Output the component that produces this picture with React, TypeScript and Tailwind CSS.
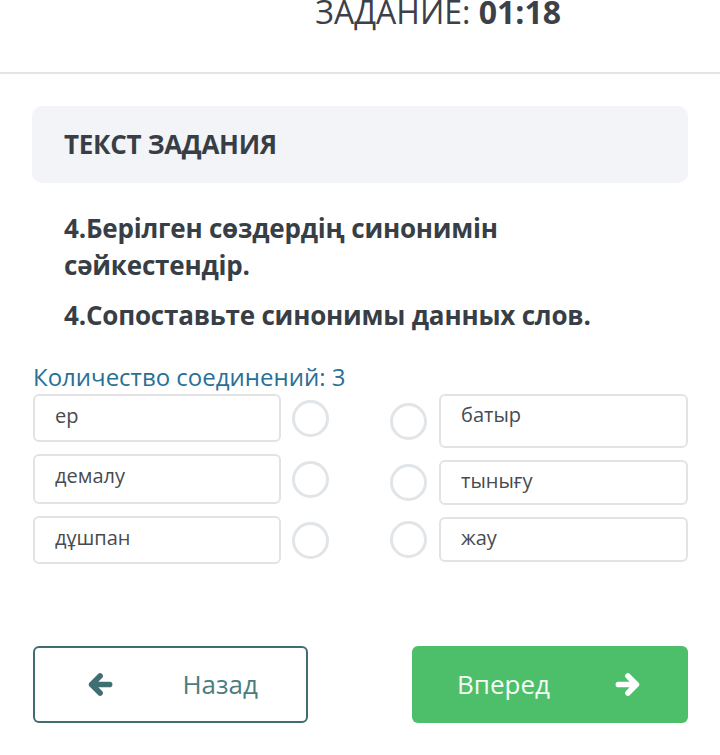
const leftItems = [
  { text: 'ер', h: 'h-[48px]' },
  { text: 'демалу', h: 'h-[50px]' },
  { text: 'дұшпан', h: 'h-[48px]' },
];

const rightItems = [
  { text: 'батыр', h: 'h-[54px]' },
  { text: 'тынығу', h: 'h-[45px]' },
  { text: 'жау', h: 'h-[45px]' },
];

function Circle() {
  return <div className="w-[37px] h-[37px] rounded-full border-[3px] border-[#e1e5e8] bg-white shrink-0" />;
}

// chunky arrow like the font-awesome solid one
function Arrow({ dir, className }: { dir: 'left' | 'right'; className?: string }) {
  return (
    <svg
      viewBox="0 0 24 24"
      className={className}
      fill="none"
      stroke="currentColor"
      strokeWidth={5}
      strokeLinecap="round"
      strokeLinejoin="round"
      style={dir === 'right' ? { transform: 'scaleX(-1)' } : undefined}
    >
      <path d="M21 12H5M12.5 4.5L5 12l7.5 7.5" />
    </svg>
  );
}

export default function App() {
  return (
    <div
      className="w-[720px] h-[755px] bg-white overflow-hidden text-[#383e46]"
      style={{ fontFamily: '"Open Sans", "Noto Sans", sans-serif' }}
    >
      <header className="h-[74px] border-b-2 border-[#e4e4e4] overflow-hidden flex justify-end pr-[159px]">
        <div className="text-[32px] leading-none mt-[-4px] text-[#3c4048]">
          ЗАДАНИЕ: <span className="font-bold">01:18</span>
        </div>
      </header>

      <main className="px-8">
        <div className="mt-[32px] h-[77px] rounded-[10px] bg-[#f3f4f7] flex items-center px-8">
          <h2 className="text-[26px] font-bold tracking-[-0.3px]">ТЕКСТ ЗАДАНИЯ</h2>
        </div>

        <div className="px-8 mt-[27px] text-[26px] font-bold leading-[37px] tracking-[-0.2px]">
          <p>4.Берілген сөздердің синонимін сәйкестендір.</p>
          <p className="mt-[13px]">4.Сопоставьте синонимы данных слов.</p>
        </div>

        <div className="mt-[28px] text-[24px] leading-[30px] text-[#2a6f96] pl-px">Количество соединений: 3</div>

        <div className="flex mt-[2px] pl-px">
          <div className="flex flex-col gap-[12px]">
            {leftItems.map((item) => (
              <div key={item.text} className="flex items-center gap-[11px]">
                <div
                  className={`w-[248px] ${item.h} rounded-[6px] border-2 border-[#e3e3e3] px-5 pt-[7px] text-[20px] leading-[26px] text-[#474b50]`}
                >
                  {item.text}
                </div>
                <Circle />
              </div>
            ))}
          </div>
          <div className="flex flex-col gap-[12px] ml-[61px]">
            {rightItems.map((item) => (
              <div key={item.text} className="flex items-center gap-[12px]">
                <Circle />
                <div
                  className={`w-[249px] ${item.h} rounded-[6px] border-2 border-[#e3e3e3] px-5 pt-[6px] text-[20px] leading-[26px] text-[#474b50]`}
                >
                  {item.text}
                </div>
              </div>
            ))}
          </div>
        </div>

        <div className="flex justify-between mt-[82px] pl-px">
          <button className="w-[275px] h-[77px] rounded-[6px] border-2 border-[#3f6d71] flex items-center justify-between pl-[51px] pr-[48px] text-[#4d7c80] text-[26px]">
            <Arrow dir="left" className="w-[27px] h-[27px] text-[#3f6f73]" />
            <span>Назад</span>
          </button>
          <button className="w-[276px] h-[77px] rounded-[6px] bg-[#4dbf6a] flex items-center justify-between pl-[45px] pr-[46px] text-[#f4fbf5] text-[26px]">
            <span>Вперед</span>
            <Arrow dir="right" className="w-[27px] h-[27px] text-white" />
          </button>
        </div>
      </main>
    </div>
  );
}
